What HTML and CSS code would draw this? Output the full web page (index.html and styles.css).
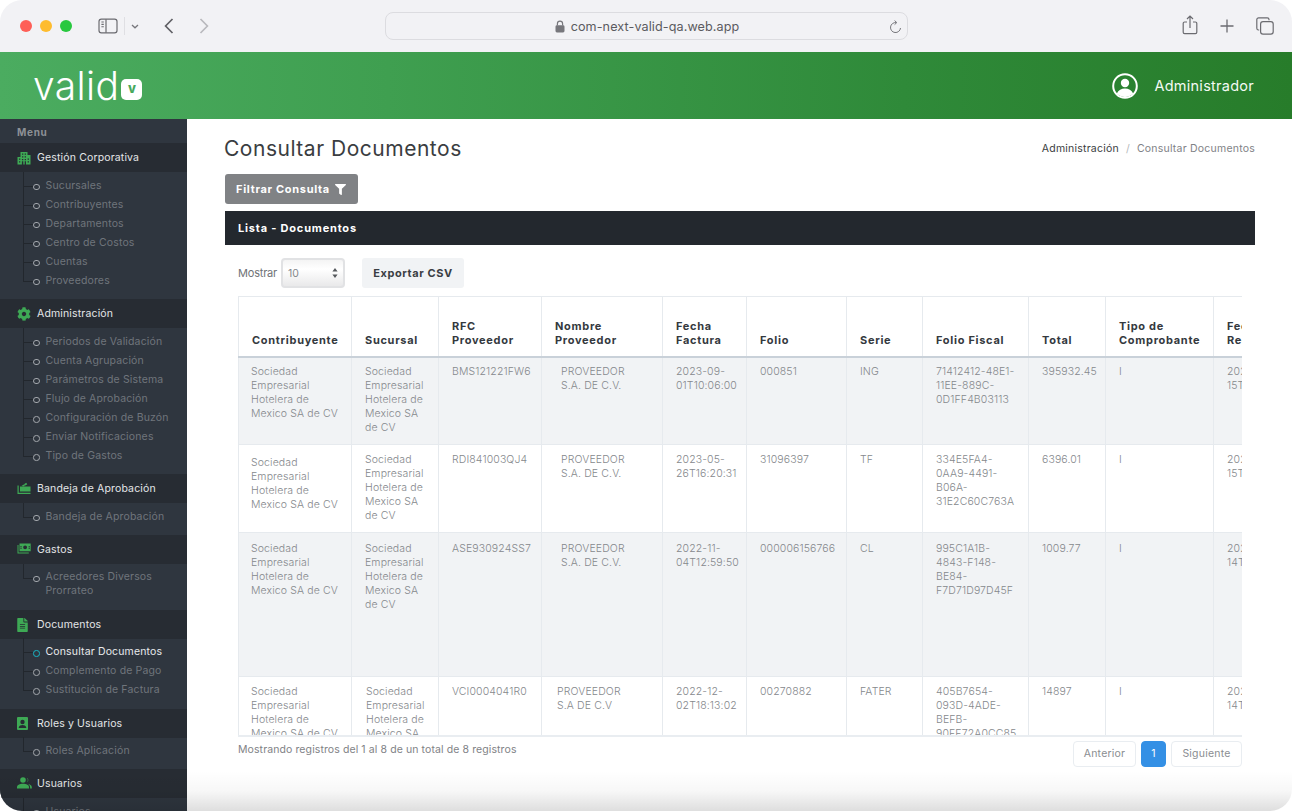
FILE: index.html
```html
<!DOCTYPE html>
<html lang="es">
<head>
<meta charset="utf-8">
<title>Consultar Documentos</title>
<link rel="stylesheet" href="styles.css">
</head>
<body>
<div class="window">
  <div class="toolbar">
    <div class="lights"><span class="light red"></span><span class="light yellow"></span><span class="light green"></span></div>
    <svg class="tb-sidebar" width="20" height="16" viewBox="0 0 20 16" fill="none" stroke="#6b6b70" stroke-width="1.2"><rect x="1" y="1.2" width="18" height="13.6" rx="2.4"/><path d="M8 1.2v13.6"/><path d="M3.4 4h2.4M3.4 6.4h2.4M3.4 8.8h2.4" stroke-width="1.1"/></svg>
    <span class="tb-divider"></span>
    <svg class="tb-caret" width="8" height="5" viewBox="0 0 8 5" fill="none" stroke="#77777c" stroke-width="1.3"><path d="M1 1l3 2.8L7 1"/></svg>
    <svg class="tb-back" width="10" height="16" viewBox="0 0 10 16" fill="none" stroke="#606065" stroke-width="1.7"><path d="M8.5 1L1.6 8l6.9 7"/></svg>
    <svg class="tb-fwd" width="10" height="16" viewBox="0 0 10 16" fill="none" stroke="#b9b9bd" stroke-width="1.7"><path d="M1.5 1l6.9 7-6.9 7"/></svg>
    <div class="urlbar">
      <svg class="lock" width="10" height="13" viewBox="0 0 10 13"><path d="M2.4 5.5V3.7a2.6 2.6 0 015.2 0v1.8" fill="none" stroke="#77777c" stroke-width="1.2"/><rect x="0.5" y="5.3" width="9" height="7.2" rx="1.4" fill="#77777c"/></svg>
      <span class="url">com-next-valid-qa.web.app</span>
      <svg class="reload" width="13" height="15" viewBox="0 0 13 15" fill="none" stroke="#77777c" stroke-width="1"><path d="M7.2 2.6A5 5 0 1 0 11.5 8"/><path d="M5.6 0.6l2.2 2-2.2 2"/></svg>
    </div>
    <svg class="tb-share" width="16" height="20" viewBox="0 0 16 20" fill="none" stroke="#6b6b70" stroke-width="1.2"><path d="M5 7H2.6A1.4 1.4 0 0 0 1.2 8.4v8.8a1.4 1.4 0 0 0 1.4 1.4h10.8a1.4 1.4 0 0 0 1.4-1.4V8.4A1.4 1.4 0 0 0 13.4 7H11"/><path d="M8 13V1.4M5 4l3-3 3 3"/></svg>
    <svg class="tb-plus" width="14" height="14" viewBox="0 0 14 14" fill="none" stroke="#6b6b70" stroke-width="1.3"><path d="M7 0.5v13M0.5 7h13"/></svg>
    <svg class="tb-tabs" width="18" height="18" viewBox="0 0 18 18" fill="none" stroke="#6b6b70" stroke-width="1.2"><rect x="4.6" y="4.6" width="12.6" height="12.6" rx="2.4"/><path d="M3.2 13H2.6A1.8 1.8 0 0 1 .8 11.2V2.6A1.8 1.8 0 0 1 2.6.8h8.6A1.8 1.8 0 0 1 13 2.6v.6"/></svg>
  </div>

  <header class="appbar">
    <div class="logo"><span class="logo-word">valid</span><span class="logo-badge">v</span></div>
    <div class="user">
      <svg class="user-icon" width="26" height="26" viewBox="0 0 26 26"><circle cx="13" cy="13" r="11.8" fill="none" stroke="#fff" stroke-width="2"/><circle cx="13" cy="10" r="4.2" fill="#fff"/><path d="M4.8 20.6c1.6-3.4 4.6-5 8.2-5s6.600 1.600 8.200 5A11 11 0 0 1 13 24a11 11 0 0 1-8.200-3.400z" fill="#fff"/></svg>
      <span class="user-name">Administrador</span>
    </div>
  </header>

  <div class="body">
    <aside class="sidebar">
      <div class="menu-label">Menu</div>

      <div class="nav-head">
        <svg class="nav-icon" width="14" height="14" viewBox="0 0 14 14" fill="#3ea955"><path d="M3.500 1h7v3h3v9.500H.5V6h3zM5 2.500v1.300h1.300V2.500zm2.700 0v1.300H9V2.500zM5 5.200v1.300h1.300V5.200zm2.700 0v1.300H9V5.200zM2 7.500v1.300h1.300V7.500zm2.900.4v1.300h1.400V7.900zm2.800 0v1.300H9V7.900zm2.900-.4v1.300H12V7.500zM2 10.300v1.300h1.300v-1.300zm2.900 0v3.200h1.400v-3.200zm2.800 0v3.200H9v-3.200zm2.900 0v1.300H12v-1.300z" fill-rule="evenodd"/></svg>
        <span>Gestión Corporativa</span>
      </div>
      <ul class="nav-list">
        <li>Sucursales</li><li>Contribuyentes</li><li>Departamentos</li><li>Centro de Costos</li><li>Cuentas</li><li>Proveedores</li>
      </ul>

      <div class="nav-head">
        <svg class="nav-icon" width="14" height="14" viewBox="0 0 512 512" fill="#3ea955"><path d="M487.400 315.700l-42.600-24.600c4.300-23.200 4.300-47 0-70.200l42.600-24.600c4.900-2.800 7.100-8.600 5.500-14-11.100-35.600-30-67.800-54.700-94.600-3.800-4.100-10-5.100-14.800-2.300L380.800 110c-17.900-15.400-38.500-27.300-60.800-35.100V25.800c0-5.600-3.900-10.500-9.400-11.700-36.700-8.200-74.300-7.800-109.200 0-5.500 1.200-9.400 6.100-9.400 11.700V75c-22.200 7.900-42.800 19.800-60.800 35.100L88.700 85.500c-4.900-2.800-11-1.900-14.800 2.300-24.700 26.700-43.600 58.900-54.700 94.600-1.700 5.400.6 11.200 5.500 14L67.300 221c-4.300 23.200-4.300 47 0 70.200l-42.600 24.600c-4.900 2.800-7.100 8.600-5.500 14 11.100 35.600 30 67.800 54.700 94.600 3.800 4.100 10 5.100 14.800 2.300l42.600-24.600c17.900 15.400 38.500 27.300 60.800 35.100v49.200c0 5.600 3.900 10.500 9.400 11.700 36.700 8.200 74.300 7.800 109.200 0 5.500-1.200 9.400-6.100 9.400-11.700v-49.200c22.200-7.900 42.800-19.800 60.800-35.100l42.600 24.600c4.900 2.800 11 1.900 14.800-2.300 24.700-26.700 43.600-58.900 54.700-94.600 1.500-5.500-.7-11.300-5.600-14.100zM256 336c-44.100 0-80-35.900-80-80s35.900-80 80-80 80 35.900 80 80-35.900 80-80 80z"/></svg>
        <span>Administración</span>
      </div>
      <ul class="nav-list">
        <li>Periodos de Validación</li><li>Cuenta Agrupación</li><li>Parámetros de Sistema</li><li>Flujo de Aprobación</li><li>Configuración de Buzón</li><li>Enviar Notificaciones</li><li>Tipo de Gastos</li>
      </ul>

      <div class="nav-head">
        <svg class="nav-icon" width="14" height="13" viewBox="0 0 14 13" fill="#3ea955"><path d="M.5 3.500h1.200v7.300h11.800V12H.5z"/><path d="M3 4.500h10.500v5H3z"/><path d="M4.500 4L9.200.8l1.100 1.400L6.800 4.500z"/><path d="M6.800 2.400l1.300 1.300" stroke="#272c33" stroke-width=".7"/></svg>
        <span>Bandeja de Aprobación</span>
      </div>
      <ul class="nav-list">
        <li>Bandeja de Aprobación</li>
      </ul>

      <div class="nav-head">
        <svg class="nav-icon" width="14" height="11" viewBox="0 0 14 11" fill="#3ea955"><path d="M.5 2v8.600h11.300v-1H1.500V2z"/><path fill-rule="evenodd" d="M2.500.4h11.200v7.900H2.500zm5.600 2a1.800 1.800 0 1 0 0 3.900 1.800 1.800 0 0 0 0-3.900zM3.500 3v1.300h1V3zm8.200 0v1.300h1V3zM3.500 4.800v1.300h1V4.800zm8.200 0v1.300h1V4.800z"/></svg>
        <span>Gastos</span>
      </div>
      <ul class="nav-list">
        <li class="two-line">Acreedores Diversos Prorrateo</li>
      </ul>

      <div class="nav-head">
        <svg class="nav-icon" width="11" height="14" viewBox="0 0 384 512" fill="#3ea955"><path d="M224 136V0H24C10.700 0 0 10.700 0 24v464c0 13.300 10.700 24 24 24h336c13.300 0 24-10.700 24-24V160H248c-13.200 0-24-10.800-24-24zm64 236c0 6.600-5.400 12-12 12H108c-6.600 0-12-5.400-12-12v-8c0-6.600 5.400-12 12-12h168c6.600 0 12 5.400 12 12v8zm0-64c0 6.600-5.400 12-12 12H108c-6.600 0-12-5.400-12-12v-8c0-6.600 5.400-12 12-12h168c6.600 0 12 5.400 12 12v8zm0-72v8c0 6.600-5.400 12-12 12H108c-6.600 0-12-5.400-12-12v-8c0-6.600 5.400-12 12-12h168c6.600 0 12 5.400 12 12zm96-114.100v6.100H256V0h6.100c6.400 0 12.500 2.500 17 7l97.900 98c4.500 4.500 7 10.600 7 16.900z"/></svg>
        <span>Documentos</span>
      </div>
      <ul class="nav-list">
        <li class="active">Consultar Documentos</li><li>Complemento de Pago</li><li>Sustitución de Factura</li>
      </ul>

      <div class="nav-head">
        <svg class="nav-icon" width="11" height="13" viewBox="0 0 11 13"><path fill="#3ea955" d="M1 0h9a1 1 0 0 1 1 1v11a1 1 0 0 1-1 1H1a1 1 0 0 1-1-1V1a1 1 0 0 1 1-1z"/><circle cx="5.500" cy="5" r="2.200" fill="#272c33"/><path fill="#272c33" d="M1.800 10.300c.4-1.500 2-2.300 3.700-2.300s3.300.8 3.700 2.300v.7H1.800z"/></svg>
        <span>Roles y Usuarios</span>
      </div>
      <ul class="nav-list">
        <li>Roles Aplicación</li>
      </ul>

      <div class="nav-head">
        <svg class="nav-icon" width="15" height="12" viewBox="0 0 15 12" fill="#3ea955"><circle cx="6" cy="3" r="2.800"/><path d="M0 11.500v-1.300C0 8 2.700 6.800 6 6.800s6 1.200 6 3.400v1.300z"/><path d="M9.600.4a2.800 2.800 0 0 1 0 5.200c.8-.6 1.200-1.600 1.200-2.600s-.4-2-1.200-2.600zM11.200 7c2.200.5 3.600 1.500 3.600 3.200v1.300h-1.700v-1.300c0-1.300-.7-2.400-1.900-3.200z"/></svg>
        <span>Usuarios</span>
      </div>
      <ul class="nav-list">
        <li>Usuarios</li>
      </ul>
    </aside>

    <main class="main">
      <div class="page-head">
        <h1 class="page-title">Consultar Documentos</h1>
        <nav class="crumbs"><span class="crumb-link">Administración</span><span class="crumb-sep">/</span><span>Consultar Documentos</span></nav>
      </div>

      <button class="btn-filter" type="button">Filtrar Consulta
        <svg width="11" height="11" viewBox="0 0 512 512" fill="#fff"><path d="M487.976 0H24.028C2.710 0-8.047 25.866 7.058 40.971L192 225.941V432c0 7.831 3.821 15.170 10.237 19.662l80 55.980C298.020 518.690 320 507.493 320 487.980V225.941l184.947-184.970C520.021 25.896 509.338 0 487.976 0z"/></svg>
      </button>

      <section class="card">
        <div class="card-head">Lista - Documentos</div>
        <div class="card-body">
          <div class="controls">
            <span class="show-label">Mostrar</span>
            <div class="select"><span>10</span>
              <svg width="6" height="10" viewBox="0 0 6 10" fill="#55585c"><path d="M3 0l2.600 3.600H.4zM3 10L.4 6.400h5.200z"/></svg>
            </div>
            <button class="btn-export" type="button">Exportar CSV</button>
          </div>

          <div class="table-wrap">
            <table class="docs">
              <thead>
                <tr>
                  <th class="c1">Contribuyente</th><th class="c2">Sucursal</th><th class="c3">RFC<br>Proveedor</th><th class="c4">Nombre<br>Proveedor</th><th class="c5">Fecha<br>Factura</th><th class="c6">Folio</th><th class="c7">Serie</th><th class="c8">Folio Fiscal</th><th class="c9">Total</th><th class="c10">Tipo de<br>Comprobante</th><th class="c11">Fecha<br>Recepción</th>
                </tr>
              </thead>
              <tbody>
                <tr class="r1 odd">
                  <td>Sociedad<br>Empresarial<br>Hotelera de<br>Mexico SA de CV</td><td>Sociedad<br>Empresarial<br>Hotelera de<br>Mexico SA<br>de CV</td><td>BMS121221FW6</td><td class="indent">PROVEEDOR<br>S.A. DE C.V.</td><td>2023-09-<br>01T10:06:00</td><td>000851</td><td>ING</td><td>71412412-48E1-<br>11EE-889C-<br>0D1FF4B03113</td><td>395932.45</td><td>I</td><td>2023-09-<br>15T10:06:00</td>
                </tr>
                <tr class="r2">
                  <td class="drop">Sociedad<br>Empresarial<br>Hotelera de<br>Mexico SA de CV</td><td>Sociedad<br>Empresarial<br>Hotelera de<br>Mexico SA<br>de CV</td><td>RDI841003QJ4</td><td class="indent">PROVEEDOR<br>S.A. DE C.V.</td><td>2023-05-<br>26T16:20:31</td><td>31096397</td><td>TF</td><td>334E5FA4-<br>0AA9-4491-<br>B06A-<br>31E2C60C763A</td><td>6396.01</td><td>I</td><td>2023-09-<br>15T16:20:31</td>
                </tr>
                <tr class="r3 odd">
                  <td>Sociedad<br>Empresarial<br>Hotelera de<br>Mexico SA de CV</td><td>Sociedad<br>Empresarial<br>Hotelera de<br>Mexico SA<br>de CV</td><td>ASE930924SS7</td><td class="indent">PROVEEDOR<br>S.A. DE C.V.</td><td>2022-11-<br>04T12:59:50</td><td>000006156766</td><td>CL</td><td>995C1A1B-<br>4843-F148-<br>BE84-<br>F7D71D97D45F</td><td>1009.77</td><td>I</td><td>2023-09-<br>14T12:59:50</td>
                </tr>
                <tr class="r4">
                  <td>Sociedad<br>Empresarial<br>Hotelera de<br>Mexico SA de CV</td><td class="nudge">Sociedad<br>Empresarial<br>Hotelera de<br>Mexico SA<br>de CV</td><td>VCI0004041R0</td><td class="indent-sm">PROVEEDOR<br>S.A DE C.V</td><td>2022-12-<br>02T18:13:02</td><td>00270882</td><td>FATER</td><td>405B7654-<br>093D-4ADE-<br>BEFB-<br>90FF72A0CC85</td><td>14897</td><td>I</td><td>2023-09-<br>14T18:13:02</td>
                </tr>
              </tbody>
            </table>
          </div>

          <div class="table-foot">
            <span class="info">Mostrando registros del 1 al 8 de un total de 8 registros</span>
            <div class="pager">
              <span class="page-btn prev">Anterior</span>
              <span class="page-btn current">1</span>
              <span class="page-btn next">Siguiente</span>
            </div>
          </div>
        </div>
      </section>
    </main>
  </div>
  <div class="bottom-fade"></div>
</div>
</body>
</html>
```
FILE: styles.css
```css
* { box-sizing: border-box; }
html, body { margin: 0; padding: 0; height: 100%; background: #fff; overflow: hidden; }
body { font-family: Inter, "Noto Sans", sans-serif; font-size: 11px; color: #7f8286; }

.window { position: relative; width: 1292px; height: 811px; border-radius: 22px; overflow: hidden; display: flex; flex-direction: column; background: #fff; }

/* Browser toolbar */
.toolbar { height: 52px; flex: none; background: #f2f2f5; display: flex; align-items: center; padding-left: 20px; }
.lights { display: flex; gap: 8px; }
.light { width: 12px; height: 12px; border-radius: 50%; }
.red { background: #fe5f57; }
.yellow { background: #febc2e; }
.green { background: #28c83f; }
.tb-sidebar { margin-left: 26px; }
.tb-divider { width: 1px; height: 18px; background: #dfdfe3; margin-left: 6px; }
.tb-caret { margin-left: 6px; }
.tb-back { margin-left: 25px; }
.tb-fwd { margin-left: 25px; }
.urlbar { margin-left: 176px; width: 523px; height: 28px; border: 1px solid #dcdce0; border-radius: 8px; background: #f2f2f5; display: flex; align-items: center; justify-content: center; position: relative; padding-left: 1px; }
.lock { margin-right: 6px; }
.url { font-size: 12.600px; color: #5b5b60; letter-spacing: 0.1px; }
.reload { position: absolute; right: 5px; top: 7px; }
.tb-share { margin-left: 274px; margin-top: -3px; }
.tb-plus { margin-left: 22px; }
.tb-tabs { margin-left: 22px; }

/* App bar */
.appbar { height: 67px; flex: none; display: flex; align-items: center; justify-content: space-between; padding: 0 38px 0 33px; background: linear-gradient(90deg, #4bac60 0%, #3f9f50 30%, #2f8a39 70%, #277c2a 100%); color: #fff; }
.logo { display: flex; align-items: flex-end; height: 40px; }
.logo-word { font-size: 39px; line-height: 40px; font-weight: 300; letter-spacing: 0.4px; font-family: Inter, sans-serif; }
.logo-badge { width: 21px; height: 21px; margin: 0 0 6px 2px; background: #fff; color: #48a95d; border-radius: 5px; font-size: 13px; font-weight: 800; line-height: 19px; text-align: center; }
.user { display: flex; align-items: center; gap: 16px; margin-right: 0; }
.user-icon { display: block; margin-left: -1px; }
.user-name { font-size: 14.500px; letter-spacing: 0.26px; color: #f4faf4; margin-top: -1px; }

/* Layout */
.body { flex: 1; display: flex; min-height: 0; }

/* Sidebar */
.sidebar { width: 187px; flex: none; background: #2f363f; overflow: hidden; }
.menu-label { height: 24px; padding: 7px 0 0 17px; font-size: 10px; line-height: 13px; font-weight: 700; letter-spacing: 0.7px; color: #8d9196; }
.nav-head { height: 29px; background: #272c33; display: flex; align-items: center; color: #e4e6e8; font-size: 10.500px; letter-spacing: 0.15px; position: relative; padding-left: 37px; }
.nav-icon { position: absolute; left: 17px; top: 8px; }
.nav-list { list-style: none; margin: 0; padding: 3.500px 0 9.100px 45.500px; position: relative; }
.nav-list li { min-height: 19.100px; line-height: 19.100px; color: #6f757c; font-size: 10.500px; letter-spacing: 0.15px; position: relative; }
.nav-list li.two-line { line-height: 14px; padding: 2.500px 0; width: 130px; }
.nav-list li.active { color: #e8eaec; }
/* tree connector */
.nav-list li::before { content: ""; position: absolute; left: -23px; top: -9.500px; width: 9px; height: 19.500px; border-left: 1px solid #22272d; border-bottom: 1px solid #22272d; }
.nav-list li:first-child::before { top: -4px; height: 14px; }
.nav-list li::after { content: ""; position: absolute; left: -12.500px; top: 8px; width: 4.500px; height: 4.500px; border: 1px solid #a3a7ac; border-radius: 50%; }
.nav-list li.active::after { border-color: #19b5c4; }

/* Main */
.main { flex: 1; min-width: 0; padding: 0 37px 0 38px; background: #fff; overflow: hidden; }
.page-head { height: 55px; display: flex; justify-content: space-between; align-items: center; padding-top: 4px; margin-left: -1px; }
.page-title { margin: 0; font-size: 21px; font-weight: 400; color: #3a3d41; letter-spacing: 0.52px; }
.crumbs { display: flex; gap: 7px; font-size: 10.500px; letter-spacing: 0.22px; color: #7f8286; }
.crumb-link { color: #3a3d41; }
.crumb-sep { color: #b5b8bc; }

.btn-filter { display: flex; align-items: center; gap: 5px; height: 30px; width: 133px; padding: 0 0 0 11px; border: 0; border-radius: 3px; background: #808285; color: #fff; font: 700 11px Inter, sans-serif; letter-spacing: 0.7px; }

.card { margin-top: 7px; }
.card-head { height: 34px; background: #23282e; color: #fff; font-size: 11px; font-weight: 700; letter-spacing: 0.8px; line-height: 35px; padding-left: 13px; }
.card-body { padding: 13px 13px 0; }

.controls { display: flex; align-items: center; height: 30px; }
.show-label { font-size: 11px; letter-spacing: -0.2px; color: #6f7276; }
.select { width: 64px; height: 30px; margin-left: 4px; padding: 0 5px 0 5px; display: flex; align-items: center; justify-content: space-between; font-size: 10.500px; color: #85888c; border: 2px solid #e1e2e4; border-radius: 4px; background: linear-gradient(180deg, #f4f4f4 0%, #ffffff 35%, #e9e9ea 100%); }
.btn-export { margin-left: 17px; width: 102px; height: 30px; padding: 0; border: 0; border-radius: 3px; background: #f1f3f5; color: #3a3e43; font: 700 11px Inter, sans-serif; letter-spacing: 0.6px; }

.table-wrap { margin-top: 8px; height: 441px; overflow: hidden; border-bottom: 2px solid #e9edf1; }
.docs { border-collapse: collapse; table-layout: fixed; width: 1100px; font-size: 10.500px; line-height: 14px; letter-spacing: 0.12px; color: #85888c; font-weight: 300; }
.docs th, .docs td { border: 1px solid #e6eaee; padding: 0 6px 0 13px; text-align: left; overflow: hidden; }
.docs th { height: 60px; vertical-align: bottom; padding-bottom: 9px; border-bottom: 2px solid #c9d1d9; color: #34393e; font-weight: 700; font-size: 11px; letter-spacing: 0.7px; }
.docs td { vertical-align: top; padding-top: 8px; }
.docs td:first-child { padding-left: 12px; }
.docs tr.odd td { background: #f1f3f5; }
.r1 { height: 88px; }
.r2 { height: 88px; }
.r3 { height: 144px; }
.r4 { height: 80px; }
.docs .r1 td { padding-top: 7px; }
.docs .r3 td { padding-top: 9px; }
.docs td.drop { padding-top: 11px; }
.docs td.indent { padding-left: 19px; }
.docs td.indent-sm { padding-left: 15px; }
.docs td.nudge { padding-left: 14px; }
.c1 { width: 113px; }
.c2 { width: 87px; }
.c3 { width: 103px; }
.c4 { width: 121px; }
.c5 { width: 84px; }
.c6 { width: 100px; }
.c7 { width: 76px; }
.c8 { width: 106px; }
.c9 { width: 77px; }
.c10 { width: 108px; }
.c11 { width: 125px; }

.table-foot { display: flex; justify-content: space-between; align-items: flex-start; padding-top: 4px; }
.info { font-size: 10.500px; line-height: 16px; letter-spacing: 0.1px; color: #7f8286; margin-top: 1px; }
.pager { display: flex; gap: 5px; }
.page-btn { height: 26px; line-height: 24px; border: 1px solid #e9edf1; border-radius: 4px; text-align: center; font-size: 10.500px; letter-spacing: 0.22px; color: #8a8d91; }
.prev { width: 63px; }
.next { width: 71px; }
.current { width: 25px; background: #3490e5; border-color: #3490e5; color: #fff; }

.bottom-fade { position: absolute; left: 0; right: 0; bottom: 0; height: 40px; pointer-events: none; background: linear-gradient(180deg, rgba(0,0,0,0) 0%, rgba(0,0,0,.03) 50%, rgba(0,0,0,.13) 100%); }
```
